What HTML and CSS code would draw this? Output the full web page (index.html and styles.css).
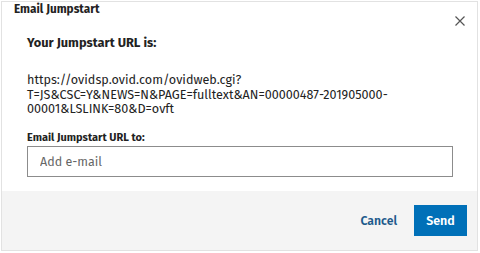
FILE: index.html
```html
<!DOCTYPE html>
<html>
<head>
<meta charset="utf-8">
<link rel="stylesheet" href="styles.css">
</head>
<body>
<div class="dialog">
  <div class="header">
    <span class="title">Email Jumpstart</span>
    <button class="close" aria-label="Close">
      <svg width="10" height="10" viewBox="0 0 10 10"><path d="M0.5 0.5L9.5 9.5M9.5 0.5L0.5 9.5" stroke="#555" stroke-width="1.2" fill="none"/></svg>
    </button>
  </div>
  <div class="body">
    <h2 class="heading">Your Jumpstart URL is:</h2>
    <p class="url">https://ovidsp.ovid.com/ovidweb.cgi?<br>T=JS&amp;CSC=Y&amp;NEWS=N&amp;PAGE=fulltext&amp;AN=00000487-201905000-<br>00001&amp;LSLINK=80&amp;D=ovft</p>
    <label class="label" for="em">Email Jumpstart URL to:</label>
    <input id="em" class="input" type="text" placeholder="Add e-mail">
  </div>
  <div class="footer">
    <button class="cancel">Cancel</button>
    <button class="send">Send</button>
  </div>
</div>
</body>
</html>
```
FILE: styles.css
```css
html, body {
  margin: 0;
  padding: 0;
  background: #fff;
  font-family: "Fira Sans", "Noto Sans", "Open Sans", sans-serif;
  color: #222;
  overflow: hidden;
}
.dialog {
  width: 477px;
  height: 250px;
  margin: 1px 0 0 1px;
  border: 1px solid #e2e2e2;
  box-sizing: border-box;
  display: flex;
  flex-direction: column;
  background: #fff;
}
.header {
  display: flex;
  justify-content: space-between;
  align-items: flex-start;
  padding: 0 12px 0 12px;
  height: 30px;
}
.title {
  font-size: 11.8px;
  font-weight: 700;
  line-height: 18px;
  margin-top: -2px;
  color: #222;
}
.close {
  border: 0;
  background: none;
  padding: 0;
  margin-top: 14px;
  width: 10px;
  height: 10px;
  display: flex;
}
.body {
  padding: 0 24px 0 25px;
  flex: 1;
}
.heading {
  margin: 3px 0 0;
  font-size: 12.8px;
  font-weight: 700;
  line-height: 16px;
  color: #222;
}
.url {
  margin: 22px 0 0;
  font-size: 12.6px;
  line-height: 14.5px;
  color: #222;
}
.label {
  display: block;
  margin-top: 14px;
  font-size: 11px;
  font-weight: 700;
  line-height: 14px;
  color: #222;
}
.input {
  display: block;
  margin-top: 1px;
  width: 426px;
  height: 31px;
  box-sizing: border-box;
  border: 1px solid #8c8c8c;
  padding: 0 12px;
  font-family: inherit;
  font-size: 12.5px;
  color: #444;
  outline: none;
}
.input::placeholder {
  color: #666;
}
.footer {
  height: 59px;
  background: #f4f4f4;
  display: flex;
  justify-content: flex-end;
  align-items: center;
  padding-right: 10px;
  gap: 17px;
}
.cancel {
  border: 0;
  background: none;
  font-family: inherit;
  font-size: 12.2px;
  font-weight: 600;
  color: #1d5b8c;
  padding: 0;
}
.send {
  border: 0;
  background: #0070b8;
  color: #fff;
  font-family: inherit;
  font-size: 12.5px;
  font-weight: 600;
  width: 53px;
  height: 31px;
  padding: 0;
}
```
